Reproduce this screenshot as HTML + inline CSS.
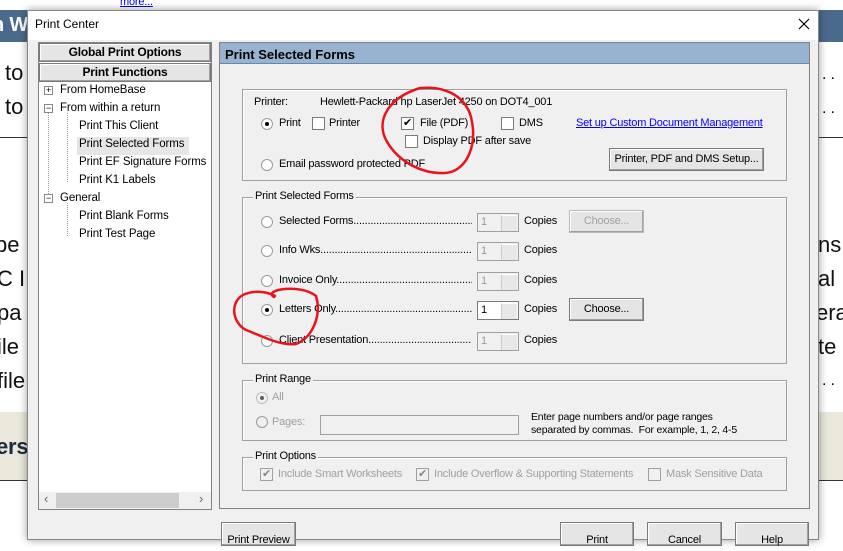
<!DOCTYPE html>
<html><head><meta charset="utf-8"><style>
*{box-sizing:border-box;margin:0;padding:0}
body{width:843px;height:532px;overflow:hidden;position:relative;background:#fff;font-family:"Liberation Sans",sans-serif;font-size:11px;letter-spacing:-0.2px;color:#000}
.a{position:absolute;white-space:nowrap}
.big{font-size:22px;color:#111;letter-spacing:0}
.grp{position:absolute;border:1px solid #a0a0a0;box-shadow:inset 1px 1px 0 #fff}
.lg{position:absolute;top:-8px;left:10px;background:#f0f0f0;padding:0 2px;font-size:11px}
.rad{position:absolute;width:12px;height:12px;border-radius:50%;border:1px solid #9a9a9a;background:#fff}
.rad.on::after{content:"";position:absolute;left:3px;top:3px;width:4px;height:4px;border-radius:50%;background:#000}
.rad.dis{background:#f0f0f0}
.cb{position:absolute;width:13px;height:13px;border:1px solid #7a7a7a;background:#fff;font-size:11px;line-height:11px;text-align:center}
.cb.dis{border-color:#a0a0a0;color:#888;background:#f0f0f0}
.btn{position:absolute;border:1px solid #7a7a7a;background:#e5e5e5;box-shadow:inset -1px -1px 0 #a0a0a0,inset 1px 1px 0 #fff;text-align:center;font-size:11px;white-space:nowrap}
.spin{position:absolute;width:42px;height:19px;border:1px solid #a0a0a0;background:#f0f0f0;color:#999;padding-left:3px;line-height:17px}
.spin.on{background:#fff;color:#000;border-color:#7a7a7a}
.spin::after{content:"";position:absolute;right:1px;top:1px;width:15px;height:15px;background:#e8e8e8;border-left:1px solid #ccc;border-top:1px solid #fff}
.gray{color:#a0a0a0}
.tree{font-size:11.5px;letter-spacing:-0.1px;color:#000}
.dl{width:193px;overflow:hidden}
</style></head><body>
<div class="a" style="left:0;top:0;width:843px;height:10px;background:#fff"></div>
<div class="a" style="left:120px;top:-4px;color:#00f;text-decoration:underline;font-size:11px">more...</div>
<div class="a" style="left:0;top:10px;width:843px;height:32px;background:#4a6a8c"></div>
<div class="a" style="left:-8px;top:14px;color:#fff;font-weight:bold;font-size:20px">n W</div>
<div class="a big" style="left:5px;top:60px">to</div>
<div class="a big" style="left:5px;top:94px">to</div>
<div class="a" style="left:0;top:137px;width:843px;height:1px;background:#333"></div>
<div class="a big" style="left:-5px;top:232px">pe</div>
<div class="a big" style="left:-3px;top:266px">C I</div>
<div class="a big" style="left:-3px;top:300px">pa</div>
<div class="a big" style="left:-3px;top:334px">ile</div>
<div class="a big" style="left:-3px;top:368px">file</div>
<div class="a" style="left:0;top:412px;width:843px;height:68px;background:#e9e8da"></div>
<div class="a" style="left:-4px;top:434px;font-size:22px;font-weight:bold;color:#1a2a40">ers</div>
<div class="a" style="left:0;top:480px;width:843px;height:1px;background:#333"></div>
<div class="a" style="left:822px;top:66px;font-size:16px">. .</div>
<div class="a" style="left:822px;top:100px;font-size:16px">. .</div>
<div class="a big" style="left:818px;top:232px">ns</div>
<div class="a big" style="left:818px;top:266px">al</div>
<div class="a big" style="left:816px;top:300px">era</div>
<div class="a big" style="left:818px;top:334px">te</div>
<div class="a" style="left:822px;top:372px;font-size:16px">. .</div>

<div class="a" style="left:27px;top:10px;width:792px;height:530px;background:#f0f0f0;border:1px solid #888;box-shadow:0 0 8px rgba(0,0,0,.4)"></div>
<div class="a" style="left:28px;top:11px;width:790px;height:29px;background:#fff"></div>
<div class="a" style="left:35px;top:17px;font-size:12px;letter-spacing:0">Print Center</div>
<svg class="a" style="left:798px;top:18px" width="12" height="12"><path d="M1,1L11,11M11,1L1,11" stroke="#000" stroke-width="1.2"/></svg>

<div class="a" style="left:38px;top:42px;width:174px;height:468px;border:1px solid #828282;background:#fff"></div>
<div class="btn" style="left:39px;top:43px;width:172px;height:19px;font-weight:bold;line-height:17px;font-size:12px">Global Print Options</div>
<div class="btn" style="left:39px;top:63px;width:172px;height:19px;font-weight:bold;line-height:17px;font-size:12px">Print Functions</div>
<div class="a" style="left:44px;top:86px;width:9px;height:9px;border:1px solid #888;font-size:9px;line-height:7px;text-align:center;background:#fff">+</div>
<div class="a" style="left:44px;top:104px;width:9px;height:9px;border:1px solid #888;font-size:9px;line-height:6px;text-align:center;background:#fff">−</div>
<div class="a" style="left:44px;top:194px;width:9px;height:9px;border:1px solid #888;font-size:9px;line-height:6px;text-align:center;background:#fff">−</div>
<div class="a" style="left:48px;top:113px;width:0;height:81px;border-left:1px dotted #999"></div>
<div class="a" style="left:67px;top:113px;width:0;height:69px;border-left:1px dotted #999"></div>
<div class="a" style="left:67px;top:203px;width:0;height:33px;border-left:1px dotted #999"></div>
<div class="a tree" style="left:60px;top:84px">From HomeBase</div>
<div class="a tree" style="left:60px;top:102px">From within a return</div>
<div class="a tree" style="left:79px;top:120px">Print This Client</div>
<div class="a" style="left:77px;top:137px;width:112px;height:18px;background:#e6e6e6"></div>
<div class="a tree" style="left:79px;top:138px">Print Selected Forms</div>
<div class="a tree" style="left:79px;top:156px">Print EF Signature Forms</div>
<div class="a tree" style="left:79px;top:174px">Print K1 Labels</div>
<div class="a tree" style="left:60px;top:192px">General</div>
<div class="a tree" style="left:79px;top:210px">Print Blank Forms</div>
<div class="a tree" style="left:79px;top:228px">Print Test Page</div>
<div class="a" style="left:39px;top:492px;width:172px;height:17px;background:#f0f0f0"></div>
<div class="a" style="left:56px;top:493px;width:123px;height:15px;background:#cdcdcd"></div>
<div class="a" style="left:44px;top:491px;color:#666;font-size:13px">‹</div>
<div class="a" style="left:199px;top:491px;color:#666;font-size:13px">›</div>

<div class="a" style="left:219px;top:42px;width:591px;height:467px;border:1px solid #828282;background:#f0f0f0"></div>
<div class="a" style="left:220px;top:43px;width:589px;height:21px;background:#98b3d0;border-bottom:1px solid #6d86a3"></div>
<div class="a" style="left:225px;top:47px;font-weight:bold;font-size:13px;letter-spacing:0">Print Selected Forms</div>

<div class="grp" style="left:242px;top:89px;width:545px;height:92px"></div>
<div class="a" style="left:254px;top:96px">Printer:</div>
<div class="a" style="left:320px;top:96px">Hewlett-Packard hp LaserJet 4250 on DOT4_001</div>
<div class="rad on" style="left:261px;top:118px"></div><div class="a" style="left:279px;top:117px">Print</div>
<div class="cb" style="left:312px;top:117px"></div><div class="a" style="left:329px;top:117px">Printer</div>
<div class="cb" style="left:401px;top:117px">✔</div><div class="a" style="left:420px;top:117px">File (PDF)</div>
<div class="cb" style="left:501px;top:117px"></div><div class="a" style="left:519px;top:117px">DMS</div>
<div class="a" style="left:576px;top:117px;color:#00f;text-decoration:underline">Set up Custom Document Management</div>
<div class="cb" style="left:405px;top:135px"></div><div class="a" style="left:423px;top:135px">Display PDF after save</div>
<div class="rad" style="left:261px;top:159px"></div><div class="a" style="left:279px;top:158px">Email password protected PDF</div>
<div class="btn" style="left:609px;top:148px;width:155px;height:23px;line-height:21px">Printer, PDF and DMS Setup...</div>

<div class="grp" style="left:242px;top:197px;width:545px;height:167px"><div class="lg">Print Selected Forms</div></div>
<div class="rad" style="left:261px;top:216px"></div><div class="a dl" style="left:279px;top:215px">Selected Forms...............................................................</div>
<div class="spin" style="left:477px;top:213px">1</div><div class="a" style="left:524px;top:215px">Copies</div>
<div class="btn" style="left:569px;top:210px;width:75px;height:23px;line-height:21px;color:#a0a0a0;border-color:#bbb">Choose...</div>
<div class="rad" style="left:261px;top:245px"></div><div class="a dl" style="left:279px;top:244px">Info Wks...................................................................................</div>
<div class="spin" style="left:477px;top:242px">1</div><div class="a" style="left:524px;top:244px">Copies</div>
<div class="rad" style="left:261px;top:275px"></div><div class="a dl" style="left:279px;top:274px">Invoice Only..............................................................................</div>
<div class="spin" style="left:477px;top:272px">1</div><div class="a" style="left:524px;top:274px">Copies</div>
<div class="rad on" style="left:261px;top:304px"></div><div class="a dl" style="left:279px;top:303px">Letters Only..............................................................................</div>
<div class="spin on" style="left:477px;top:301px">1</div><div class="a" style="left:524px;top:303px">Copies</div>
<div class="btn" style="left:569px;top:298px;width:75px;height:23px;line-height:21px">Choose...</div>
<div class="rad" style="left:261px;top:335px"></div><div class="a dl" style="left:279px;top:334px">Client Presentation...................................................................</div>
<div class="spin" style="left:477px;top:332px">1</div><div class="a" style="left:524px;top:334px">Copies</div>

<div class="grp" style="left:242px;top:380px;width:545px;height:61px"><div class="lg">Print Range</div></div>
<div class="rad on dis" style="left:256px;top:392px;opacity:.6"></div><div class="a gray" style="left:272px;top:391px">All</div>
<div class="rad dis" style="left:256px;top:416px"></div><div class="a gray" style="left:272px;top:416px">Pages:</div>
<div class="a" style="left:320px;top:415px;width:199px;height:20px;border:1px solid #a0a0a0;background:#f0f0f0"></div>
<div class="a" style="left:531px;top:411px;font-size:10.5px;line-height:13px">Enter page numbers and/or page ranges<br>separated by commas.&nbsp; For example, 1, 2, 4-5</div>

<div class="grp" style="left:242px;top:457px;width:545px;height:34px"><div class="lg">Print Options</div></div>
<div class="cb dis" style="left:260px;top:468px">✔</div><div class="a gray" style="left:278px;top:468px">Include Smart Worksheets</div>
<div class="cb dis" style="left:416px;top:468px">✔</div><div class="a gray" style="left:434px;top:468px">Include Overflow &amp; Supporting Statements</div>
<div class="cb dis" style="left:648px;top:468px"></div><div class="a gray" style="left:666px;top:468px">Mask Sensitive Data</div>

<div class="btn" style="left:221px;top:522px;width:75px;height:24px;line-height:22px;padding-top:6px">Print Preview</div>
<div class="btn" style="left:560px;top:522px;width:74px;height:24px;line-height:22px;padding-top:6px">Print</div>
<div class="btn" style="left:647px;top:522px;width:75px;height:24px;line-height:22px;padding-top:6px">Cancel</div>
<div class="btn" style="left:735px;top:522px;width:74px;height:24px;line-height:22px;padding-top:6px">Help</div>

<svg class="a" style="left:0;top:0" width="843" height="532">
<g fill="none" stroke="#e8141c" stroke-width="2.5" stroke-linecap="round">
<path d="M421,88 C445,86 468,96 472,122 C477,148 465,172 445,173 C422,174 398,162 386,140 C376,120 388,98 420,88"/>
<path d="M274,297 C262,290 300,283 316,296 C322,316 312,338 296,344 C280,346 262,336 246,330 C231,322 230,300 245,294 C256,290 268,292 275,296"/>
</g></svg>
</body></html>
